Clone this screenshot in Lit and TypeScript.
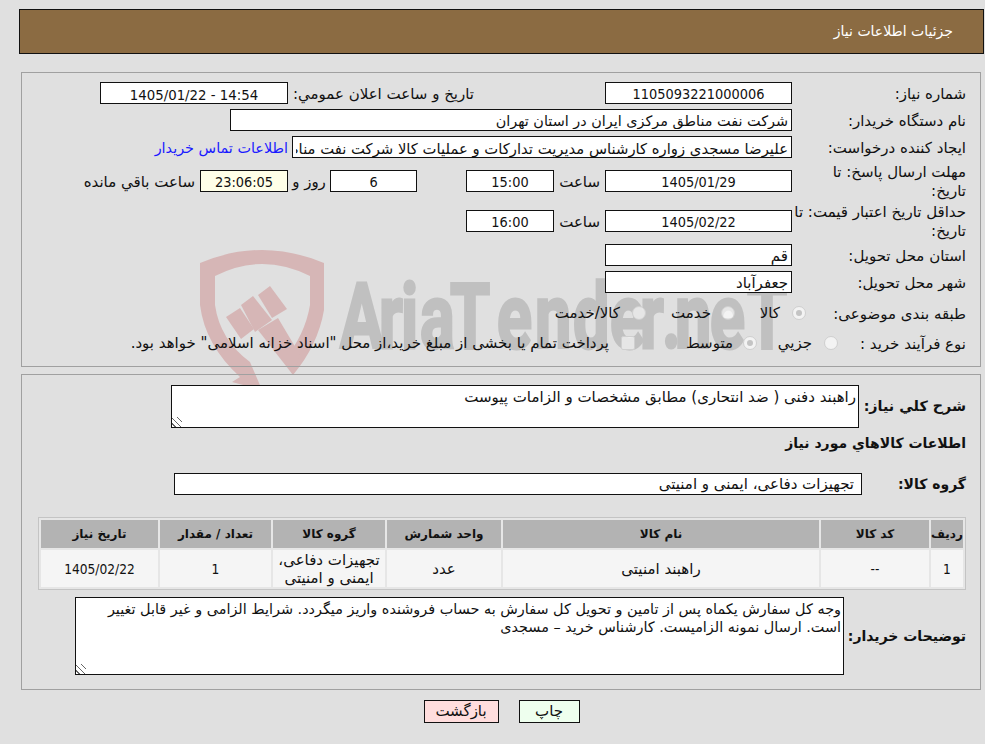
import { LitElement, html, css } from "lit";
import { customElement } from "lit/decorators.js";

@customElement("app-root")
export class AppRoot extends LitElement {
  static styles = css`
    :host {
      display: block;
      position: relative;
      min-height: 744px;
      background: #e0e0e0;
      color: #111;
      font-family: "DejaVu Sans", sans-serif;
      font-size: 15px;
      line-height: 19px;
      overflow: hidden;
    }
    .wm { position: absolute; left: 0; top: 0; width: 985px; height: 744px; }
    .wm-shield { fill: #d6b6b6; }
    .wm-text {
      fill: #c0c0c0;
      stroke: #c0c0c0;
      stroke-width: 3px;
      font-family: "Roboto", "Liberation Sans", sans-serif;
      font-weight: 700;
      font-size: 90px;
    }
    .page {
      position: relative;
      direction: rtl;
      padding: 9px 1px 0 19px;
    }
    .head {
      box-sizing: border-box;
      height: 45px;
      border: 1px solid #111;
      background: #8b6b42;
      color: #fff;
      font-size: 14px;
      display: flex;
      align-items: center;
      padding-right: 30px;
    }
    .panel {
      border: 1px solid #a0a0a0;
      margin: 18px 3px 0 2px;
      padding: 9px 14px 13px 0;
      display: flex;
      flex-direction: column;
      gap: 5px;
    }
    .panel.second { margin-top: 7px; padding-top: 10px; padding-bottom: 14px; gap: 0; }
    .row { display: flex; align-items: center; height: 22px; }
    .row.r4 { height: 36px; }
    .row.r5 { height: 34px; }
    .row.r6 { margin-top: 1px; }
    .row.r8 { height: 30px; }
    .row.r9 { height: 20px; }
    .lbl { width: 174px; flex: none; box-sizing: border-box; padding-left: 7px; padding-top: 2px; }
    .lbl.full { padding-left: 0; }
    .lbl.narrow8 { width: 160px; padding-left: 0; white-space: nowrap; }
    .lbl.narrow9 { width: 128px; padding-left: 0; white-space: nowrap; }
    .box {
      box-sizing: border-box;
      height: 22px;
      border: 1px solid #111;
      background: #fff;
      color: #111;
      font: inherit;
      padding: 0 3px;
      margin: 0;
      outline: none;
      border-radius: 0;
      flex: none;
    }
    .first .box { padding-top: 2px; }
    .first .ann, .first .hour, .first .day, .first .rest, .first .link { padding-top: 2px; }
    .c { text-align: center; }
    .num {
      font-family: "DejaVu Sans Condensed", "DejaVu Sans", sans-serif;
      font-size: 14.4px;
    }
    .stamp { font-size: 14.8px; }
    .cell-num { font-size: 13.6px; }
    .tight { font-size: 14.4px; }
    .mid { font-size: 14.8px; }
    .w187 { width: 187px; }
    .w188 { width: 188px; }
    .w562 { width: 562px; }
    .w500 { width: 500px; }
    .w88 { width: 88px; }
    .w87 { width: 87px; }
    .cream { background: #ffffe8; }
    .ann { width: 186px; margin-right: 131px; flex: none; white-space: nowrap; box-sizing: content-box; }
    .link { color: #1a1aff; margin-right: 4px; white-space: nowrap; text-decoration: none; font-size: 14.4px; }
    .hour { width: 51px; flex: none; box-sizing: border-box; padding-right: 5px; white-space: nowrap; }
    .spacer { width: 49px; flex: none; }
    .day { width: 42px; flex: none; text-align: center; white-space: nowrap; }
    .rest { margin-right: 5px; white-space: nowrap; }
    .opt { display: flex; align-items: center; gap: 12px; flex: none; white-space: nowrap; }
    .o71 { width: 71px; }
    .o89 { width: 89px; gap: 10px; }
    .o81 { width: 81px; }
    .o122 { width: 122px; gap: 10px; }
    .radio {
      box-sizing: border-box;
      width: 14px;
      height: 14px;
      border-radius: 50%;
      border: 1px solid #cfcfcf;
      background: rgba(255, 255, 255, 0.6);
      flex: none;
      display: flex;
      align-items: center;
      justify-content: center;
    }
    .radio.on::after {
      content: "";
      width: 6px;
      height: 6px;
      border-radius: 50%;
      background: #c4c4c4;
    }
    .check { border-radius: 2px; }
    .area {
      display: block;
      box-sizing: border-box;
      border: 1px solid #111;
      background: #fff;
      color: #111;
      font: inherit;
      padding: 2px;
      margin: 0;
      outline: none;
      border-radius: 0;
      flex: none;
      resize: both;
    }
    .area::-webkit-resizer {
      background: repeating-linear-gradient(45deg, #fff 0 2px, #666 2px 3px, #fff 3px 4px) left bottom / 10px 10px no-repeat;
    }
    .a1 { width: 688px; height: 43px; }
    .a2 { width: 769px; height: 78px; line-height: 18px; font-size: 14.4px; }
    .b { font-weight: 700; font-size: 14px; flex: none; }
    .l107 { width: 107px; box-sizing: border-box; padding-left: 5px; white-space: nowrap; font-size: 14.3px; }
    .l104 { width: 104px; }
    .l122 { width: 122px; white-space: nowrap; }
    .r-area { display: flex; align-items: center; }
    .title { height: 20px; margin-top: 5px; line-height: 20px; }
    .g1 { margin-top: 20px; }
    .g1 .box { width: 688px; padding-right: 7px; }
    table {
      width: 928px;
      margin-top: 22px;
      table-layout: fixed;
      border-collapse: separate;
      border-spacing: 2px;
      border: 1px solid #c4c4c4;
      background: #e6e6e6;
    }
    th {
      height: 28px;
      padding: 0;
      background: #b3b3b3;
      font-size: 12px;
      font-weight: 700;
      text-align: center;
    }
    td {
      height: 37px;
      padding: 0 2px;
      background: #f5f5f5;
      text-align: center;
      line-height: 18px;
    }
    .notes { margin-top: 7px; }
    .actions { display: flex; justify-content: center; gap: 20px; margin-top: 10px; }
    .btn {
      box-sizing: border-box;
      height: 23px;
      border: 1px solid #111;
      font: inherit;
      color: #111;
      padding: 0;
      border-radius: 0;
    }
    .print { width: 61px; background: #eeffee; }
    .back { width: 75px; background: #ffdddd; }
  `;

  render() {
    const xs = [340, 379, 401, 420, 450, 497, 535, 573, 610, 640, 662, 675, 710, 747]
      .map((v) => (v / 0.72).toFixed(1))
      .join(" ");
    return html`
      <svg class="wm" viewBox="0 0 985 744" aria-hidden="true">
        <path
          class="wm-shield"
          d="M200,263 Q262,237 324,263 L324,310 Q318,345 293,375 L284,360 Q305,335 310,305 L310,276 Q262,252 215,276 L215,305 Q220,340 250,362 L262,390 L232,382 L240,377 Q205,345 200,305 Z"
        />
        <path class="wm-shield" d="M258,330 L278,318 L300,355 L293,375 Z" />
        <path class="wm-shield" d="M226,317 L240,308 L254,329 L241,339 Z" />
        <path class="wm-shield" d="M241,305 L253,296 L272,320 L255,332 Z" />
        <path class="wm-shield" d="M258,295 L270,286 L287,309 L272,318 Z" />
        <text class="wm-text" transform="scale(0.72 1)" x=${xs} y="348" direction="ltr">AriaTender.neT</text>
      </svg>
      <div class="page">
        <div class="head">جزئیات اطلاعات نیاز</div>

        <section class="panel first">
          <div class="row">
            <span class="lbl">شماره نیاز:</span>
            <input class="box c w187 num" readonly .value=${"1105093221000006"} />
            <span class="ann">تاريخ و ساعت اعلان عمومي:</span>
            <input class="box c w188 num stamp" readonly .value=${"1405/01/22 - 14:54"} dir="ltr" />
          </div>
          <div class="row">
            <span class="lbl">نام دستگاه خریدار:</span>
            <input class="box w562 tight" readonly .value=${"شرکت نفت مناطق مرکزی ایران در استان تهران"} />
          </div>
          <div class="row">
            <span class="lbl">ایجاد کننده درخواست:</span>
            <input class="box w500 mid" readonly .value=${"علیرضا مسجدی زواره کارشناس مدیریت تدارکات و عملیات کالا شرکت نفت مناطق مرکزی ایران"} />
            <a class="link" href="#">اطلاعات تماس خریدار</a>
          </div>
          <div class="row r4">
            <span class="lbl">مهلت ارسال پاسخ: تا تاریخ:</span>
            <input class="box c w187 num" readonly .value=${"1405/01/29"} />
            <span class="hour">ساعت</span>
            <input class="box c w88 num" readonly .value=${"15:00"} />
            <span class="spacer"></span>
            <input class="box c w87 num" readonly .value=${"6"} />
            <span class="day">روز و</span>
            <input class="box c w88 cream num" readonly .value=${"23:06:05"} />
            <span class="rest">ساعت باقي مانده</span>
          </div>
          <div class="row r5">
            <span class="lbl full">حداقل تاریخ اعتبار قیمت: تا تاریخ:</span>
            <input class="box c w187 num" readonly .value=${"1405/02/22"} />
            <span class="hour">ساعت</span>
            <input class="box c w88 num" readonly .value=${"16:00"} />
          </div>
          <div class="row r6">
            <span class="lbl">استان محل تحویل:</span>
            <input class="box w187" readonly .value=${"قم"} />
          </div>
          <div class="row">
            <span class="lbl">شهر محل تحویل:</span>
            <input class="box w187" readonly .value=${"جعفرآباد"} />
          </div>
          <div class="row r8">
            <span class="lbl narrow8">طبقه بندی موضوعی:</span>
            <span class="opt o71"><i class="radio on"></i>کالا</span>
            <span class="opt o89"><i class="radio"></i>خدمت</span>
            <span class="opt"><i class="radio"></i>کالا/خدمت</span>
          </div>
          <div class="row r9">
            <span class="lbl narrow9">نوع فرآیند خرید :</span>
            <span class="opt o81"><i class="radio"></i>جزیي</span>
            <span class="opt o122"><i class="radio on"></i>متوسط</span>
            <span class="opt"><i class="radio check"></i>پرداخت تمام یا بخشی از مبلغ خرید،از محل "اسناد خزانه اسلامی" خواهد بود.</span>
          </div>
        </section>

        <section class="panel second">
          <div class="r-area">
            <span class="b l107">شرح کلي نیاز:</span>
            <textarea class="area a1" readonly .value=${"راهبند دفنی ( ضد انتحاری) مطابق مشخصات و الزامات پیوست"}></textarea>
          </div>
          <div class="b title">اطلاعات کالاهاي مورد نیاز</div>
          <div class="row g1">
            <span class="b l104">گروه کالا:</span>
            <input class="box" readonly .value=${"تجهیزات دفاعی، ایمنی و امنیتی"} />
          </div>
          <table>
            <colgroup>
              <col style="width:32px" /><col style="width:108px" /><col style="width:316px" /><col style="width:114px" /><col style="width:112px" /><col style="width:111px" /><col style="width:117px" />
            </colgroup>
            <thead>
              <tr><th>ردیف</th><th>کد کالا</th><th>نام کالا</th><th>واحد شمارش</th><th>گروه کالا</th><th>تعداد / مقدار</th><th>تاریخ نیاز</th></tr>
            </thead>
            <tbody>
              <tr><td class="num cell-num">1</td><td class="num cell-num">--</td><td>راهبند امنیتی</td><td>عدد</td><td>تجهیزات دفاعی، ایمنی و امنیتی</td><td class="num cell-num">1</td><td class="num cell-num">1405/02/22</td></tr>
            </tbody>
          </table>
          <div class="r-area notes">
            <span class="b l122">توضیحات خریدار:</span>
            <textarea class="area a2" readonly .value=${"وجه کل سفارش یکماه پس از تامین و تحویل کل سفارش به حساب فروشنده واریز میگردد. شرایط الزامی و غیر قابل تغییر است. ارسال نمونه الزامیست. کارشناس خرید – مسجدی"}></textarea>
          </div>
        </section>

        <div class="actions">
          <button class="btn print">چاپ</button>
          <button class="btn back">بازگشت</button>
        </div>
      </div>
    `;
  }
}
